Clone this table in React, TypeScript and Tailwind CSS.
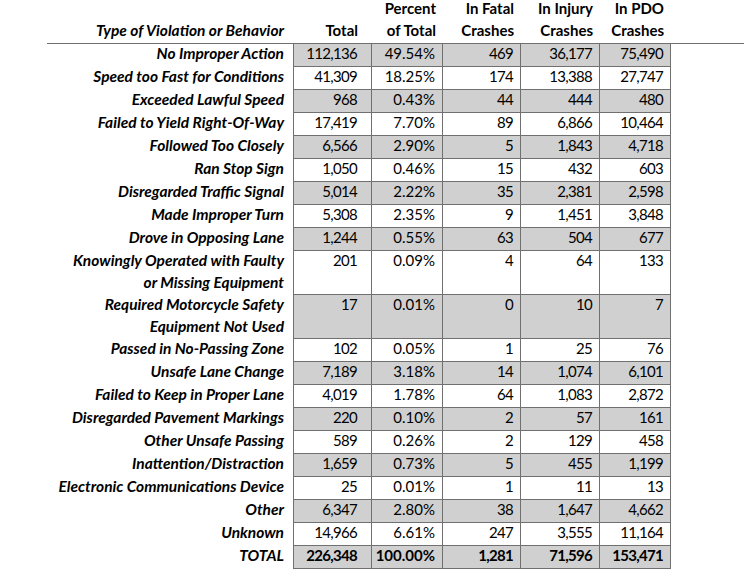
import React from "react";

type Row = {
  label: string[];
  total: string;
  pct: string;
  fatal: string;
  injury: string;
  pdo: string;
  bold?: boolean;
};

const rows: Row[] = [
  { label: ["No Improper Action"], total: "112,136", pct: "49.54%", fatal: "469", injury: "36,177", pdo: "75,490" },
  { label: ["Speed too Fast for Conditions"], total: "41,309", pct: "18.25%", fatal: "174", injury: "13,388", pdo: "27,747" },
  { label: ["Exceeded Lawful Speed"], total: "968", pct: "0.43%", fatal: "44", injury: "444", pdo: "480" },
  { label: ["Failed to Yield Right-Of-Way"], total: "17,419", pct: "7.70%", fatal: "89", injury: "6,866", pdo: "10,464" },
  { label: ["Followed Too Closely"], total: "6,566", pct: "2.90%", fatal: "5", injury: "1,843", pdo: "4,718" },
  { label: ["Ran Stop Sign"], total: "1,050", pct: "0.46%", fatal: "15", injury: "432", pdo: "603" },
  { label: ["Disregarded Traffic Signal"], total: "5,014", pct: "2.22%", fatal: "35", injury: "2,381", pdo: "2,598" },
  { label: ["Made Improper Turn"], total: "5,308", pct: "2.35%", fatal: "9", injury: "1,451", pdo: "3,848" },
  { label: ["Drove in Opposing Lane"], total: "1,244", pct: "0.55%", fatal: "63", injury: "504", pdo: "677" },
  { label: ["Knowingly Operated with Faulty", "or Missing Equipment"], total: "201", pct: "0.09%", fatal: "4", injury: "64", pdo: "133" },
  { label: ["Required Motorcycle Safety", "Equipment Not Used"], total: "17", pct: "0.01%", fatal: "0", injury: "10", pdo: "7" },
  { label: ["Passed in No-Passing Zone"], total: "102", pct: "0.05%", fatal: "1", injury: "25", pdo: "76" },
  { label: ["Unsafe Lane Change"], total: "7,189", pct: "3.18%", fatal: "14", injury: "1,074", pdo: "6,101" },
  { label: ["Failed to Keep in Proper Lane"], total: "4,019", pct: "1.78%", fatal: "64", injury: "1,083", pdo: "2,872" },
  { label: ["Disregarded Pavement Markings"], total: "220", pct: "0.10%", fatal: "2", injury: "57", pdo: "161" },
  { label: ["Other Unsafe Passing"], total: "589", pct: "0.26%", fatal: "2", injury: "129", pdo: "458" },
  { label: ["Inattention/Distraction"], total: "1,659", pct: "0.73%", fatal: "5", injury: "455", pdo: "1,199" },
  { label: ["Electronic Communications Device"], total: "25", pct: "0.01%", fatal: "1", injury: "11", pdo: "13" },
  { label: ["Other"], total: "6,347", pct: "2.80%", fatal: "38", injury: "1,647", pdo: "4,662" },
  { label: ["Unknown"], total: "14,966", pct: "6.61%", fatal: "247", injury: "3,555", pdo: "11,164" },
  { label: ["TOTAL"], total: "226,348", pct: "100.00%", fatal: "1,281", injury: "71,596", pdo: "153,471", bold: true },
];

const cols = "grid grid-cols-[246px_79px_71px_78px_79px_71px]";

export default function App() {
  return (
    <div
      className="w-[744px] h-[571px] overflow-hidden bg-white pl-[47px] text-[15px] text-black"
      style={{ fontFamily: "Lato, 'Open Sans', sans-serif" }}
    >
      {/* header */}
      <div className={`${cols} h-[44px] grid-rows-[41px] items-end border-b border-[#707070] font-bold leading-[22px]`}>
        <div className="pr-[9px] text-right text-[15.5px] italic">Type of Violation or Behavior</div>
        <div className="pr-[14px] text-right">Total</div>
        <div className="pr-[7px] text-right">Percent<br />of Total</div>
        <div className="pr-[7px] text-right">In Fatal<br />Crashes</div>
        <div className="pr-[7px] text-right">In Injury<br />Crashes</div>
        <div className="pr-[7px] text-right">In PDO<br />Crashes</div>
      </div>

      {rows.map((r, i) => {
        const fill = i % 2 === 0 ? "bg-[#d0d0d0]" : "bg-white";
        const cell = `border-b border-r border-[#707070] text-right ${fill}`;
        const tall = r.label.length > 1;
        const shift = tall ? "-mt-[2px]" : "";
        return (
          <div
            key={i}
            className={`${cols} ${tall ? "h-[44px] leading-[22px]" : "h-[23px] leading-[18px]"} ${r.bold ? "font-bold" : ""}`}
          >
            <div className={`pr-[9px] text-right text-[15.5px] font-bold italic ${shift}`}>
              {r.label.map((l, j) => (
                <div key={j}>{l}</div>
              ))}
            </div>
            <div className={`${cell} border-l pr-[14px] tracking-[-0.7px]`}>
              <div className={shift}>{r.total}</div>
            </div>
            <div className={`${cell} pr-[7px]`}>
              <div className={shift}>{r.pct}</div>
            </div>
            <div className={`${cell} pr-[7px] tracking-[-0.7px]`}>
              <div className={shift}>{r.fatal}</div>
            </div>
            <div className={`${cell} pr-[7px] tracking-[-0.7px]`}>
              <div className={shift}>{r.injury}</div>
            </div>
            <div className={`${cell} pr-[7px] tracking-[-0.7px]`}>
              <div className={shift}>{r.pdo}</div>
            </div>
          </div>
        );
      })}
    </div>
  );
}
